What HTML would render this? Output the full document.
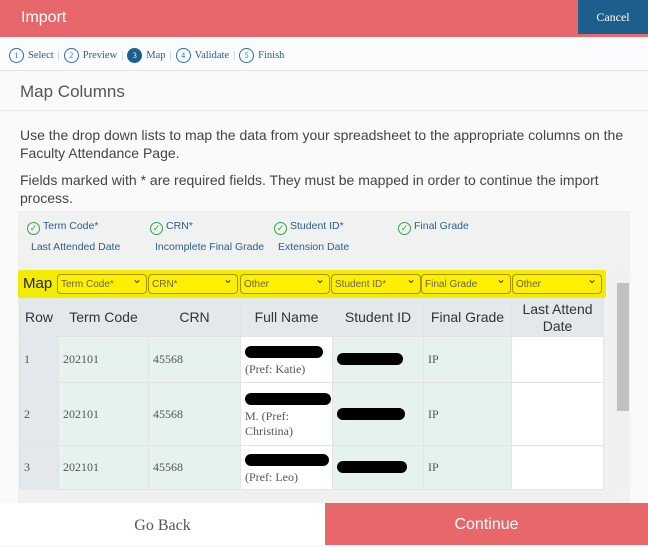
<!DOCTYPE html>
<html><head><meta charset="utf-8"><style>
*{box-sizing:border-box;margin:0;padding:0}
body{width:648px;height:545px;position:relative;overflow:hidden;background:#fafafa;font-family:"Liberation Sans",sans-serif}
.a{position:absolute}
.ser{font-family:"Liberation Serif",serif}
.step{display:inline-flex;align-items:center;gap:4px;margin-right:3px}
.c{display:inline-block;width:15px;height:15px;border:1px solid #2a6fa8;border-radius:50%;font-size:8px;text-align:center;line-height:13px;color:#2a6fa8}
.sep{color:#bbb;margin:0 4px 0 1px}
.p{font-size:14px;color:#444;line-height:18px}
.lg{font-size:10.5px;color:#2c5e8c;line-height:14px}
.chk{display:inline-block;width:13px;height:13px;border:1px solid #3aa045;border-radius:50%;font-size:9px;line-height:11px;text-align:center;color:#3aa045;margin-right:3px;vertical-align:-2px}
.sel{position:absolute;top:274px;height:20px;border:1px solid #a89000;border-radius:4px;font-size:10px;color:#665;padding:4px 3px;background:#ffef00;line-height:11px}
.sel:after{content:"⌄";position:absolute;right:4px;top:-1px;font-size:12px;color:#333}
table{border-collapse:collapse;position:absolute;left:19px;top:298px;width:584px;table-layout:fixed}
td,th{border:1px solid #e2e5e4;font-weight:normal}
th{background:#e2e8ec;height:38px;font-size:14px;color:#333;line-height:17px}
td{font-family:"Liberation Serif",serif;font-size:12px;color:#555;padding-left:4px}
.g{background:#e5f3ec}.r{background:#e2e8ec}.w{background:#fff}
.bl{display:block;height:12px;background:#000;border-radius:6px;margin:3px 0 4px}
</style></head><body>
<div class="a" style="left:0;top:0;width:648px;height:37px;background:#e8676a"></div>
<div class="a" style="left:21px;top:0;line-height:36px;color:#fff;font-size:16px">Import</div>
<div class="a ser" style="left:578px;top:0;width:70px;height:34px;background:#1d5f8c;color:#fff;font-size:12px;text-align:center;line-height:34px">Cancel</div>
<div class="a" style="left:0;top:37px;width:648px;height:34px;background:#fafbfc;border-bottom:1px solid #e3e3e3"></div>
<div class="a ser" style="left:9px;top:48px;font-size:10.5px;color:#2a5f8f;display:flex;align-items:center">
<span class="step"><span class="c">1</span>Select</span><span class="sep">|</span>
<span class="step"><span class="c">2</span>Preview</span><span class="sep">|</span>
<span class="step"><span class="c" style="background:#1d5f8c;color:#fff;border-color:#1d5f8c">3</span>Map</span><span class="sep">|</span>
<span class="step"><span class="c">4</span>Validate</span><span class="sep">|</span>
<span class="step"><span class="c">5</span>Finish</span></div>
<div class="a" style="left:20px;top:82px;font-size:17px;color:#555">Map Columns</div>
<div class="a" style="left:0;top:110px;width:648px;height:1px;background:#e8e8e8"></div>
<div class="a p" style="left:20px;top:126px;width:615px">Use the drop down lists to map the data from your spreadsheet to the appropriate columns on the Faculty Attendance Page.</div>
<div class="a p" style="left:20px;top:171px;width:615px">Fields marked with * are required fields. They must be mapped in order to continue the import process.</div>
<div class="a" style="left:18px;top:211px;width:612px;height:292px;background:#f0f1f1"></div>
<div class="a lg" style="left:27px;top:219px"><span class="chk">✓</span>Term Code*</div>
<div class="a lg" style="left:150px;top:219px"><span class="chk">✓</span>CRN*</div>
<div class="a lg" style="left:274px;top:219px"><span class="chk">✓</span>Student ID*</div>
<div class="a lg" style="left:398px;top:219px"><span class="chk">✓</span>Final Grade</div>
<div class="a lg" style="left:31px;top:240px">Last Attended Date</div>
<div class="a lg" style="left:155px;top:240px">Incomplete Final Grade</div>
<div class="a lg" style="left:278px;top:240px">Extension Date</div>
<div class="a" style="left:18px;top:270px;width:588px;height:28px;background:#f2ec00;border-radius:2px"></div>
<div class="a" style="left:23px;top:275px;font-size:15px;color:#222">Map</div>
<div class="sel" style="left:57px;width:90px">Term Code*</div>
<div class="sel" style="left:148px;width:90px">CRN*</div>
<div class="sel" style="left:240px;width:90px">Other</div>
<div class="sel" style="left:331px;width:90px">Student ID*</div>
<div class="sel" style="left:421px;width:90px">Final Grade</div>
<div class="sel" style="left:512px;width:90px">Other</div>
<div class="a" style="left:612px;top:270px;width:16px;height:219px;background:#f0f0f0"></div>
<div class="a" style="left:617px;top:283px;width:12px;height:128px;background:#c1c1c1"></div>
<div class="a" style="left:18px;top:489px;width:594px;height:14px;background:#f0f0f0"></div>
<table>
<colgroup><col style="width:39px"><col style="width:90px"><col style="width:92px"><col style="width:92px"><col style="width:91px"><col style="width:88px"><col style="width:92px"></colgroup>
<tr><th>Row</th><th>Term Code</th><th>CRN</th><th>Full Name</th><th>Student ID</th><th>Final Grade</th><th>Last Attend Date</th></tr>
<tr style="height:46px"><td class="r">1</td><td class="g">202101</td><td class="g">45568</td><td class="w"><span class="bl" style="width:78px"></span>(Pref: Katie)</td><td class="g"><span class="bl" style="width:66px"></span></td><td class="g">IP</td><td class="w"></td></tr>
<tr style="height:63px"><td class="r">2</td><td class="g">202101</td><td class="g">45568</td><td class="w"><span class="bl" style="width:86px"></span>M. (Pref:<br>Christina)</td><td class="g"><span class="bl" style="width:68px"></span></td><td class="g">IP</td><td class="w"></td></tr>
<tr style="height:44px"><td class="r">3</td><td class="g">202101</td><td class="g">45568</td><td class="w"><span class="bl" style="width:84px"></span>(Pref: Leo)</td><td class="g"><span class="bl" style="width:70px"></span></td><td class="g">IP</td><td class="w"></td></tr>
</table>
<div class="a" style="left:0;top:503px;width:325px;height:42px;background:#fff"></div>
<div class="a ser" style="left:0;top:517px;width:325px;text-align:center;font-size:16px;color:#555">Go Back</div>
<div class="a" style="left:325px;top:503px;width:323px;height:42px;background:#e8676a;color:#fff;font-size:16px;text-align:center;line-height:44px">Continue</div>
</body></html>
